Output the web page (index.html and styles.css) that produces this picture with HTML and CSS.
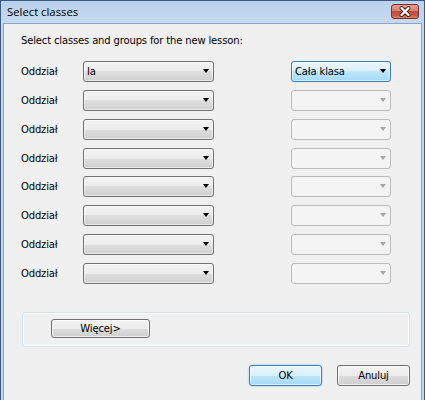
FILE: index.html
```html
<!DOCTYPE html>
<html>
<head>
<meta charset="utf-8">
<link rel="stylesheet" href="styles.css">
</head>
<body>
<div class="window">
  <div class="titlebar">
    <span class="title">Select classes</span>
    <span class="close">
      <svg width="28" height="15" viewBox="0 0 28 15">
        <path d="M10.5 4 L17.5 11 M17.5 4 L10.5 11" stroke="#4a1e1e" stroke-width="4" stroke-linecap="round"/>
        <path d="M10.5 4 L17.5 11 M17.5 4 L10.5 11" stroke="#ffffff" stroke-width="2.2" stroke-linecap="round"/>
      </svg>
    </span>
  </div>
  <div class="client">
    <div class="intro">Select classes and groups for the new lesson:</div>
    <div class="rows">
      <div class="row"><span class="label">Oddział</span><div class="combo"><span class="val">Ia</span><span class="arrow"></span></div><div class="combo small hot"><span class="val">Cała klasa</span><span class="arrow"></span></div></div>
      <div class="row"><span class="label">Oddział</span><div class="combo"><span class="val"></span><span class="arrow"></span></div><div class="combo small disabled"><span class="val"></span><span class="arrow"></span></div></div>
      <div class="row"><span class="label">Oddział</span><div class="combo"><span class="val"></span><span class="arrow"></span></div><div class="combo small disabled"><span class="val"></span><span class="arrow"></span></div></div>
      <div class="row"><span class="label">Oddział</span><div class="combo"><span class="val"></span><span class="arrow"></span></div><div class="combo small disabled"><span class="val"></span><span class="arrow"></span></div></div>
      <div class="row"><span class="label">Oddział</span><div class="combo"><span class="val"></span><span class="arrow"></span></div><div class="combo small disabled"><span class="val"></span><span class="arrow"></span></div></div>
      <div class="row"><span class="label">Oddział</span><div class="combo"><span class="val"></span><span class="arrow"></span></div><div class="combo small disabled"><span class="val"></span><span class="arrow"></span></div></div>
      <div class="row"><span class="label">Oddział</span><div class="combo"><span class="val"></span><span class="arrow"></span></div><div class="combo small disabled"><span class="val"></span><span class="arrow"></span></div></div>
      <div class="row"><span class="label">Oddział</span><div class="combo"><span class="val"></span><span class="arrow"></span></div><div class="combo small disabled"><span class="val"></span><span class="arrow"></span></div></div>
    </div>
    <div class="group">
      <button class="btn more">Więcej&gt;</button>
    </div>
    <div class="actions">
      <button class="btn default">OK</button>
      <button class="btn">Anuluj</button>
    </div>
  </div>
</div>
</body>
</html>
```
FILE: styles.css
```css
html, body {
  margin: 0;
  padding: 0;
  background: #f0f0f0;
}
.window {
  width: 425px;
  height: 400px;
  box-sizing: border-box;
  border: 1px solid #3e5a7c;
  border-bottom: none;
  background: #c3d7ee;
  display: flex;
  flex-direction: column;
  font-family: "DejaVu Sans", sans-serif;
  font-size: 10px;
  letter-spacing: -0.15px;
  color: #000;
}
.titlebar {
  height: 22px;
  display: flex;
  align-items: center;
  justify-content: space-between;
  padding: 0 5px 0 6px;
  background: linear-gradient(#b9d1ec, #c5daf1);
}
.title {
  font-family: "Open Sans", sans-serif;
  font-size: 11.3px;
  letter-spacing: 0;
  color: #000;
  margin-top: -1px;
}
.close {
  width: 28px;
  height: 15px;
  margin-top: -2px;
  box-sizing: border-box;
  border: 1px solid #7d2d25;
  border-radius: 3px;
  background: linear-gradient(#e6a08f 0%, #d7806e 45%, #c24e3a 50%, #c8573f 80%, #da896a 100%);
  display: flex;
}
.close svg {
  margin: -1px;
}
.client {
  flex: 1;
  margin: 0 2px;
  background: #f0f0f0;
  border: 1px solid #8aa5c5;
  border-bottom: none;
  padding: 0 0 0 17px;
  box-shadow: 0 3px 0 #2ec0e0;
  display: flex;
  flex-direction: column;
}
.intro {
  margin-top: 10px;
  line-height: 13px;
  height: 13px;
}
.rows {
  margin-top: 14px;
  display: flex;
  flex-direction: column;
  gap: 7.86px;
}
.row {
  display: flex;
  align-items: center;
  height: 21px;
}
.label {
  width: 62px;
}
.combo {
  width: 131px;
  height: 21px;
  box-sizing: border-box;
  border: 1px solid #707070;
  border-radius: 3px;
  background: linear-gradient(#f3f3f3 0%, #ececec 50%, #dedede 50%, #d0d0d0 100%);
  box-shadow: inset 0 0 0 1px rgba(255,255,255,0.55);
  display: flex;
  align-items: center;
  justify-content: space-between;
  padding: 0 4px 0 3px;
}
.combo.small {
  width: 100px;
  margin-left: 77px;
}
.combo.hot {
  border-color: #3c7fb1;
  background: linear-gradient(#eaf6fd 0%, #d9f0fc 50%, #bee6fd 50%, #a7d9f5 100%);
}
.combo.disabled {
  border-color: #b9bcbe;
  background: #f4f4f4;
  box-shadow: none;
}
.val {
  line-height: 13px;
}
.arrow {
  width: 0;
  height: 0;
  border-left: 3.5px solid transparent;
  border-right: 3.5px solid transparent;
  border-top: 4px solid #000;
  margin-top: -1px;
}
.disabled .arrow {
  border-top-color: #a5a5a5;
}
.group {
  margin-top: 28px;
  width: 388px;
  height: 35px;
  box-sizing: border-box;
  border: 1px solid #d5dfe5;
  border-radius: 3px;
  box-shadow: inset 0 0 0 1px #ffffff;
  margin-left: 1px;
  padding: 6px 0 0 28px;
}
.btn {
  font-family: "DejaVu Sans", sans-serif;
  font-size: 10px;
  letter-spacing: -0.15px;
  color: #000;
  height: 21px;
  width: 73px;
  box-sizing: border-box;
  border: 1px solid #707070;
  border-radius: 3px;
  background: linear-gradient(#f3f3f3 0%, #ececec 50%, #dddddd 50%, #cfcfcf 100%);
  box-shadow: inset 0 0 0 1px rgba(255,255,255,0.7);
  padding: 0;
  margin: 0;
}
.btn.more {
  width: 99px;
  height: 19px;
}
.btn.default {
  border-color: #3c7fb1;
  background: linear-gradient(#eaf6fd 0%, #d9f0fc 50%, #bee6fd 50%, #a7d9f5 100%);
  box-shadow: inset 0 0 0 1px rgba(255,255,255,0.6), 0 0 2px #7ec4ea;
}
.actions {
  margin-top: 18px;
  display: flex;
  gap: 15px;
  padding-left: 228px;
}
```
